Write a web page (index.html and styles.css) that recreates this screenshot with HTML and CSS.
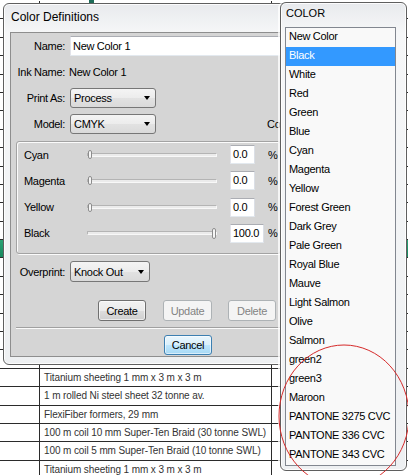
FILE: index.html
```html
<!DOCTYPE html>
<html>
<head>
<meta charset="utf-8">
<title>Color Definitions</title>
<link rel="stylesheet" href="styles.css">
</head>
<body>
<div class="sheet">
  <div class="trow first"><div class="tc1"></div><div class="tc2"></div><div class="tc3"></div></div>
  <div class="trow"><div class="tc1"></div><div class="tc2"></div><div class="tc3"></div></div>
  <div class="trow"><div class="tc1"></div><div class="tc2"></div><div class="tc3"></div></div>
  <div class="trow"><div class="tc1"></div><div class="tc2"></div><div class="tc3"></div></div>
  <div class="trow"><div class="tc1"></div><div class="tc2"></div><div class="tc3"></div></div>
  <div class="trow"><div class="tc1"></div><div class="tc2"></div><div class="tc3"></div></div>
  <div class="trow"><div class="tc1"></div><div class="tc2"></div><div class="tc3"></div></div>
  <div class="trow"><div class="tc1"></div><div class="tc2"></div><div class="tc3"></div></div>
  <div class="trow"><div class="tc1"></div><div class="tc2"></div><div class="tc3"></div></div>
  <div class="trow"><div class="tc1"></div><div class="tc2"></div><div class="tc3"></div></div>
  <div class="trow"><div class="tc1"></div><div class="tc2"></div><div class="tc3"></div></div>
  <div class="trow"><div class="tc1"></div><div class="tc2"></div><div class="tc3"></div></div>
  <div class="trow"><div class="tc1"></div><div class="tc2"></div><div class="tc3"></div></div>
  <div class="trow green"><div class="tc1"></div><div class="tc2"></div><div class="tc3"></div></div>
  <div class="trow"><div class="tc1"></div><div class="tc2"></div><div class="tc3"></div></div>
  <div class="trow"><div class="tc1"></div><div class="tc2"></div><div class="tc3"></div></div>
  <div class="trow"><div class="tc1"></div><div class="tc2"></div><div class="tc3"></div></div>
  <div class="trow"><div class="tc1"></div><div class="tc2"></div><div class="tc3"></div></div>
  <div class="trow"><div class="tc1"></div><div class="tc2"></div><div class="tc3"></div></div>
  <div class="trow"><div class="tc1"></div><div class="tc2"></div><div class="tc3"></div></div>
  <div class="trow"><div class="tc1"></div><div class="tc2">Titanium sheeting 1 mm x 3 m x 3 m</div><div class="tc3"></div></div>
  <div class="trow"><div class="tc1"></div><div class="tc2">1 m rolled Ni steel sheet 32 tonne av.</div><div class="tc3"></div></div>
  <div class="trow"><div class="tc1"></div><div class="tc2">FlexiFiber formers, 29 mm</div><div class="tc3"></div></div>
  <div class="trow"><div class="tc1"></div><div class="tc2">100 m coil 10 mm Super-Ten Braid (30 tonne SWL)</div><div class="tc3"></div></div>
  <div class="trow"><div class="tc1"></div><div class="tc2">100 m coil 5 mm Super-Ten Braid (10 tonne SWL)</div><div class="tc3"></div></div>
  <div class="trow"><div class="tc1"></div><div class="tc2">Titanium sheeting 1 mm x 3 m x 3 m</div><div class="tc3"></div></div>
</div>
<div class="tick"></div>

<div class="dialog">
  <div class="titlebar">Color Definitions</div>
  <div class="client">
    <div class="line r-name"><span class="lbl">Name:</span><div class="textbox wide">New Color 1</div></div>
    <div class="line r-std"><span class="lbl">Ink Name:</span><span class="val">New Color 1</span></div>
    <div class="line r-std"><span class="lbl">Print As:</span><div class="combo w86"><span>Process</span><i class="arrow"></i></div></div>
    <div class="line r-std"><span class="lbl">Model:</span><div class="combo w86"><span>CMYK</span><i class="arrow"></i></div><span class="cut">Color:</span></div>
    <div class="group">
      <div class="srow"><span class="slbl">Cyan</span><div class="slider"><i class="track"></i><i class="thumb"></i></div><div class="numwrap"><div class="num">0.0</div></div><span class="pct">%</span></div>
      <div class="srow"><span class="slbl">Magenta</span><div class="slider"><i class="track"></i><i class="thumb"></i></div><div class="numwrap"><div class="num">0.0</div></div><span class="pct">%</span></div>
      <div class="srow"><span class="slbl">Yellow</span><div class="slider"><i class="track"></i><i class="thumb"></i></div><div class="numwrap"><div class="num">0.0</div></div><span class="pct">%</span></div>
      <div class="srow"><span class="slbl">Black</span><div class="slider"><i class="track"></i><i class="thumb end"></i></div><div class="numwrap"><div class="num wide">100.0</div></div><span class="pct">%</span></div>
    </div>
    <div class="line r-over"><span class="lbl">Overprint:</span><div class="combo w80"><span>Knock Out</span><i class="arrow"></i></div></div>
    <div class="buttons">
      <button class="btn b-create">Create</button>
      <button class="btn b-update" disabled>Update</button>
      <button class="btn b-delete" disabled>Delete</button>
    </div>
    <div class="sep"></div>
    <div class="bottom"><button class="btn b-cancel default">Cancel</button></div>
  </div>
</div>

<div class="popup">
  <div class="ptitle">COLOR</div>
  <div class="listbox">
    <div class="item">New Color</div>
    <div class="item sel">Black</div>
    <div class="item">White</div>
    <div class="item">Red</div>
    <div class="item">Green</div>
    <div class="item">Blue</div>
    <div class="item">Cyan</div>
    <div class="item">Magenta</div>
    <div class="item">Yellow</div>
    <div class="item">Forest Green</div>
    <div class="item">Dark Grey</div>
    <div class="item">Pale Green</div>
    <div class="item">Royal Blue</div>
    <div class="item">Mauve</div>
    <div class="item">Light Salmon</div>
    <div class="item">Olive</div>
    <div class="item">Salmon</div>
    <div class="item">green2</div>
    <div class="item">green3</div>
    <div class="item">Maroon</div>
    <div class="item">PANTONE 3275 CVC</div>
    <div class="item">PANTONE 336 CVC</div>
    <div class="item">PANTONE 343 CVC</div>
  </div>
</div>

<svg class="mark" width="408" height="475" viewBox="0 0 408 475">
  <ellipse cx="344" cy="416" rx="65" ry="71" fill="none" stroke="#d62a2a" stroke-width="1"/>
</svg>
</body>
</html>
```

FILE: styles.css
```css
* { box-sizing: border-box; }
html, body { margin: 0; padding: 0; }
body {
  width: 408px;
  height: 475px;
  overflow: hidden;
  position: relative;
  background: #fff;
  font-family: "Liberation Sans", Arial, sans-serif;
  font-size: 11px;
  letter-spacing: -0.3px;
  color: #000;
}

/* background sheet */
.sheet { display: flex; flex-direction: column; }
.trow {
  flex: none;
  height: 18.4px;
  display: flex;
  border-top: 1px solid #2b2b2b;
}
.trow.first { border-top-color: transparent; }
.trow.green { background: linear-gradient(#2aa274, #17885e); }
.tc1 { flex: none; width: 40px; border-right: 1px solid #2b2b2b; }
.tc2 {
  flex: none;
  width: 232px;
  border-right: 1px solid #2b2b2b;
  padding-left: 4px;
  font-size: 10px;
  letter-spacing: -0.1px;
  line-height: 17.4px;
  color: #333;
  white-space: nowrap;
  overflow: hidden;
}
.tc3 { flex: 1; }
.tick { position: absolute; left: 89px; top: 0; width: 5px; height: 3px; background: #1d6b58; }

/* dialog window */
.dialog {
  position: absolute;
  left: 3px;
  top: 3px;
  width: 290px;
  height: 362px;
  border: 1px solid #5f5f5f;
  border-radius: 6px;
  background: linear-gradient(#e8eaed, #f6f7f8 30px, #eef0f2);
  box-shadow: inset 0 0 0 1px rgba(255,255,255,0.85);
  display: flex;
  flex-direction: column;
  overflow: hidden;
}
.titlebar {
  flex: none;
  height: 28px;
  padding: 6px 0 0 7px;
  font-size: 12px;
  line-height: 15px;
  letter-spacing: 0;
}
.client {
  flex: none;
  margin-left: 6px;
  width: 274px;
  height: 325px;
  background: #d5d5d5;
  border: 1px solid #8e8e8e;
  display: flex;
  flex-direction: column;
}
.line { flex: none; display: flex; align-items: center; }
.r-name { margin-top: 3px; height: 20px; }
.r-std { margin-top: 6px; height: 20px; }
.r-over { margin-top: 7px; height: 21px; }
.lbl { flex: none; width: 54px; margin-right: 5px; text-align: right; white-space: nowrap; }
.val { margin-left: -1px; }
.cut { flex: none; margin-left: 111px; white-space: nowrap; }

.textbox {
  height: 20px;
  background: #fff;
  border: 1px solid;
  border-color: #abadb3 #dbdfe6 #e3e9ef #e2e3ea;
  padding-left: 2px;
  line-height: 18px;
  white-space: nowrap;
}
.textbox.wide { flex: 1; }

.combo {
  flex: none;
  height: 100%;
  display: flex;
  align-items: center;
  justify-content: space-between;
  padding: 0 5px 0 3px;
  border: 1px solid #777;
  border-radius: 3px;
  background: linear-gradient(#f4f4f4, #ececec 50%, #e2e2e2 51%, #dadada);
}
.w86 { width: 86px; }
.w80 { width: 80px; }
.arrow {
  width: 0;
  height: 0;
  border-left: 3.5px solid transparent;
  border-right: 3.5px solid transparent;
  border-top: 4px solid #000;
}

/* slider group */
.group {
  flex: none;
  margin: 7px 2px 0 5px;
  height: 113px;
  border: 1px solid #a3a3a3;
  border-radius: 3px;
  box-shadow: inset 1px 1px 0 #fbfbfb, 1px 1px 0 #fbfbfb;
  padding: 3px 0 0 7px;
  display: flex;
  flex-direction: column;
  gap: 7.33px;
}
.srow { flex: none; height: 19px; display: flex; align-items: center; }
.slbl { flex: none; width: 63px; }
.slider { flex: none; position: relative; width: 130px; height: 19px; display: flex; align-items: center; }
.track {
  flex: 1;
  height: 4px;
  background: #ebebeb;
  border: 1px solid;
  border-color: #b4b4b4 #f8f8f8 #f8f8f8 #b4b4b4;
  border-radius: 1px;
}
.thumb {
  position: absolute;
  left: 1px;
  top: 5px;
  width: 4px;
  height: 9px;
  border: 1px solid #8c8c8c;
  border-radius: 2px;
  background: #f6f6f6;
}
.thumb.end { left: auto; right: 1px; top: 4px; height: 11px; }
.numwrap { flex: none; margin-left: 13px; width: 38px; }
.num {
  width: 25px;
  height: 19px;
  background: #fff;
  border: 1px solid;
  border-color: #abadb3 #dbdfe6 #e3e9ef #e2e3ea;
  padding-left: 2px;
  line-height: 17px;
  white-space: nowrap;
}
.num.wide { width: 34px; }

/* buttons */
.buttons { flex: none; margin-top: 18px; height: 21px; display: flex; }
.btn {
  flex: none;
  font: inherit;
  letter-spacing: inherit;
  height: 100%;
  width: 48px;
  padding: 0;
  color: #000;
  border: 1px solid #707070;
  border-radius: 3px;
  background: linear-gradient(#f2f2f2, #ebebeb 50%, #dddddd 51%, #cfcfcf);
  box-shadow: inset 0 0 0 1px rgba(255,255,255,0.6);
}
.btn:disabled {
  border-color: #adb2b5;
  background: #f4f4f4;
  color: #838383;
  box-shadow: none;
}
.b-create { margin-left: 87px; }
.b-update { margin-left: 17px; width: 49px; }
.b-delete { margin-left: 16px; }
.sep {
  flex: none;
  margin: 6px 0 0 5px;
  height: 2px;
  border-top: 1px solid #a0a0a0;
  border-bottom: 1px solid #fafafa;
}
.bottom { flex: none; margin-top: 6px; height: 20px; display: flex; }
.b-cancel { margin-left: 153px; }
.btn.default {
  border-color: #3c7fb1;
  background: linear-gradient(#eaf6fd, #d9f0fc 50%, #bee6fd 51%, #a7d9f5);
  box-shadow: inset 0 0 0 1px rgba(255,255,255,0.55);
}

/* color popup */
.popup {
  position: absolute;
  left: 280px;
  top: 2px;
  width: 127px;
  height: 469px;
  border: 1px solid #5f5f5f;
  border-radius: 6px;
  background: linear-gradient(#e8eaed, #f6f7f8 30px, #eef0f2);
  box-shadow: inset 0 0 0 1px rgba(255,255,255,0.85), -2px 0 0 rgba(255,255,255,0.75);
  padding: 0 10px 0 4px;
  display: flex;
  flex-direction: column;
}
.ptitle {
  flex: none;
  height: 24px;
  padding: 4px 0 0 1px;
  line-height: 13px;
  letter-spacing: 0;
}
.listbox {
  flex: none;
  height: 439px;
  border: 1px solid #828790;
  background: #f9f9f9;
}
.item {
  height: 19px;
  line-height: 17px;
  padding-left: 3px;
  white-space: nowrap;
}
.item.sel { background: #3399ff; color: #fff; }

.mark { position: absolute; left: 0; top: 0; pointer-events: none; }
```
